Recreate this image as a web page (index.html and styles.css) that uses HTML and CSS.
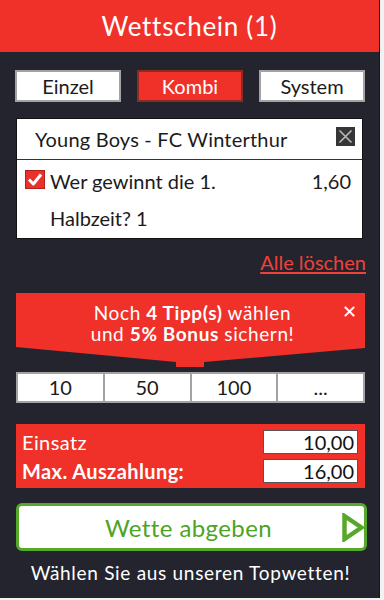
FILE: index.html
```html
<!DOCTYPE html>
<html lang="de">
<head>
<meta charset="utf-8">
<title>Wettschein</title>
<link rel="stylesheet" href="styles.css">
</head>
<body>
<div class="slip">
  <header class="slip-head">Wettschein (1)</header>
  <main class="slip-body">
    <nav class="tabs">
      <button class="tab">Einzel</button>
      <button class="tab tab-active">Kombi</button>
      <button class="tab">System</button>
    </nav>

    <section class="bet">
      <div class="bet-head">
        <span class="bet-match">Young Boys - FC Winterthur</span>
        <span class="bet-remove">
          <svg viewBox="0 0 19 19" width="19" height="19"><rect width="19" height="19" fill="#363636"/><path d="M3.5 3.5 L15.5 15.5 M15.5 3.5 L3.5 15.5" stroke="#b9b9b9" stroke-width="1.6" fill="none"/></svg>
        </span>
      </div>
      <div class="bet-sel">
        <span class="check">
          <svg viewBox="0 0 20 19" width="20" height="19"><rect width="20" height="19" fill="#e8322b"/><rect x="0.5" y="0.5" width="19" height="18" fill="none" stroke="#b3201b" stroke-width="1"/><path d="M4 9.5 L8.3 14 L16 4.5" stroke="#fff" stroke-width="3" fill="none" stroke-linejoin="round"/></svg>
        </span>
        <span class="sel-text">Wer gewinnt die 1.<br>Halbzeit? 1</span>
        <span class="sel-odds">1,60</span>
      </div>
    </section>

    <div class="clear-row"><a class="clear-all" href="#">Alle löschen</a></div>

    <div class="bonus">
      <p class="bonus-text">Noch <b>4 Tipp(s)</b> wählen<br>und <b>5% Bonus</b> sichern!</p>
      <span class="bonus-close">✕</span>
    </div>

    <div class="quick">
      <span class="quick-cell">10</span>
      <span class="quick-cell">50</span>
      <span class="quick-cell">100</span>
      <span class="quick-cell">...</span>
    </div>

    <div class="stake">
      <div class="stake-row">
        <span class="stake-label">Einsatz</span>
        <span class="stake-field">10,00</span>
      </div>
      <div class="stake-row">
        <span class="stake-label stake-strong">Max. Auszahlung:</span>
        <span class="stake-field">16,00</span>
      </div>
    </div>

    <button class="submit">
      <span class="submit-text">Wette abgeben</span>
      <svg class="submit-arrow" viewBox="0 0 23 29" width="23" height="29"><path d="M2.5 3 L19.5 14.5 L2.5 26 Z" fill="none" stroke="#55a82a" stroke-width="4.5" stroke-linejoin="miter"/></svg>
    </button>

    <p class="footer-note">Wählen Sie aus unseren Topwetten!</p>
  </main>
</div>
</body>
</html>
```

FILE: styles.css
```css
* { box-sizing: border-box; }

html, body {
  margin: 0;
  padding: 0;
  background: #f2f2f2;
}

body {
  font-family: "Lato", "Noto Sans", sans-serif;
}

.slip {
  width: 380px;
  height: 598px;
  background: #23242e;
  border-right: 1px solid #15161c;
  overflow: hidden;
}

.slip-head {
  height: 52px;
  background: #ef3129;
  color: #fff;
  font-size: 26px;
  letter-spacing: 0.7px;
  line-height: 52px;
  text-align: center;
}

.slip-body {
  padding: 18px 14px 0 16px;
  display: flex;
  flex-direction: column;
}

.tabs {
  display: flex;
  gap: 16px;
  margin-left: -1px;
}

.tab {
  width: 106px;
  height: 32px;
  border: 2px solid #a3a3a3;
  background: #fff;
  color: #1b1b1b;
  font-family: inherit;
  font-size: 20px;
  line-height: 26px;
  padding: 0;
}

.tab-active {
  background: #ef3129;
  border-color: #8c2a25;
  color: #fff;
}

.bet {
  margin-top: 16px;
  width: 347px;
  background: #fff;
  border: 1px solid #111;
}

.bet-head {
  height: 41px;
  border-bottom: 1px solid #333;
  display: flex;
  align-items: center;
  justify-content: space-between;
  padding: 0 7px 0 18px;
  font-size: 20px;
  letter-spacing: 0.2px;
  color: #1b1b1b;
}

.bet-remove {
  display: flex;
  margin-top: -6px;
}

.bet-sel {
  display: grid;
  grid-template-columns: 25px 1fr auto;
  align-items: start;
  padding: 3px 11px 1px 8px;
  font-size: 20px;
  line-height: 37px;
  color: #1b1b1b;
}

.check {
  display: flex;
  margin-top: 7px;
}

.clear-row {
  display: flex;
  justify-content: flex-end;
  width: 350px;
  margin-top: 11px;
}

.clear-all {
  color: #f0413a;
  font-size: 20px;
  line-height: 24px;
  text-decoration: underline;
  text-underline-offset: 2px;
}

.bonus {
  position: relative;
  margin-top: 19px;
  width: 349px;
  height: 74px;
  background: #ef3129;
  clip-path: polygon(0 0, 100% 0, 100% 55px, 188px 69px, 188px 74px, 160px 74px, 160px 69px, 0 54px);
}

.bonus-text {
  margin: 0;
  padding-top: 9px;
  text-align: center;
  color: #fff;
  font-size: 19px;
  letter-spacing: 0.6px;
  line-height: 21px;
  padding-left: 4px;
}

.bonus-close {
  position: absolute;
  top: 8px;
  right: 8px;
  color: #fff;
  font-size: 18px;
  font-weight: bold;
  font-family: "DejaVu Sans", sans-serif;
}

.quick {
  margin-top: 5px;
  width: 349px;
  height: 31px;
  display: grid;
  grid-template-columns: repeat(4, 1fr);
  gap: 2px;
  padding: 2px;
  background: #a3a3a3;
}

.quick-cell {
  background: #fff;
  color: #1b1b1b;
  font-size: 20px;
  line-height: 27px;
  text-align: center;
}

.stake {
  margin-top: 21px;
  width: 349px;
  height: 64px;
  background: #ef3129;
  padding: 6px 7px 5px 6px;
  display: flex;
  flex-direction: column;
  gap: 5px;
}

.stake-row {
  display: flex;
  justify-content: space-between;
  align-items: center;
  height: 24px;
}

.stake-label {
  color: #fff;
  font-size: 20px;
  letter-spacing: 0.4px;
}

.stake-strong {
  font-weight: bold;
}

.stake-field {
  width: 95px;
  height: 24px;
  background: #fff;
  border: 1px solid #555;
  color: #111;
  font-size: 20px;
  line-height: 22px;
  text-align: right;
  padding-right: 3px;
}

.submit {
  margin-top: 15px;
  width: 351px;
  height: 48px;
  background: #fff;
  border: 3px solid #55a82a;
  border-radius: 6px;
  padding: 0 0 0 16px;
  display: flex;
  align-items: center;
  font-family: inherit;
}

.submit-text {
  flex: 1;
  text-align: center;
  color: #4ea324;
  font-size: 24px;
  letter-spacing: 0.4px;
}

.submit-arrow {
  display: block;
  margin-right: -1px;
}

.footer-note {
  margin: 10px 0 0;
  width: 349px;
  text-align: center;
  color: #fff;
  font-size: 19px;
  letter-spacing: 0.7px;
  line-height: 24px;
}
```
